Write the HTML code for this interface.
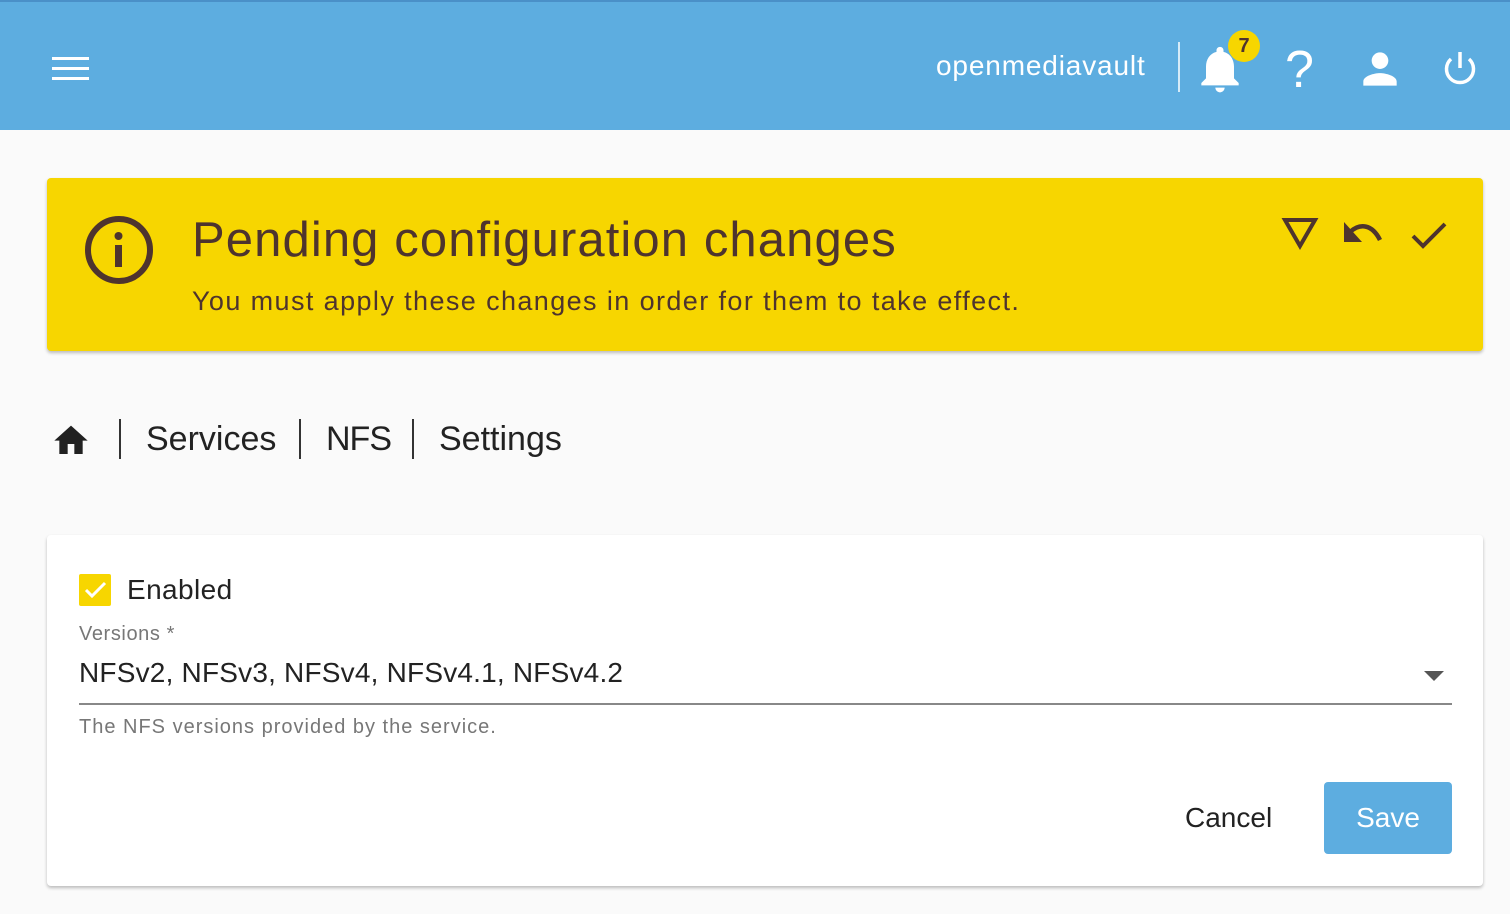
<!DOCTYPE html>
<html><head><style>
body{margin:0;width:1510px;height:914px;background:#fafafa;font-family:"Liberation Sans",sans-serif;position:relative;overflow:hidden}
.hdr{position:absolute;left:0;top:0;width:1510px;height:130px;background:#5dade0;border-top:2px solid #4a90c8;box-sizing:border-box}
.abs{position:absolute}
.banner{position:absolute;left:47px;top:178px;width:1436px;height:173px;background:#f7d600;border-radius:4px;box-shadow:0 2px 3px rgba(0,0,0,.25);color:#4e342e}
.card{position:absolute;left:47px;top:535px;width:1436px;height:351px;background:#fff;border-radius:4px;box-shadow:0 2px 3px rgba(0,0,0,.25)}
</style></head><body>
<div class="hdr">
<svg class="abs" style="left:52px;top:54px" width="38" height="28"><rect y="1" width="37" height="3" fill="#fff"/><rect y="11" width="37" height="3" fill="#fff"/><rect y="21" width="37" height="3" fill="#fff"/></svg>
<div class="abs" style="left:936px;top:48px;font-size:28px;color:#fff;letter-spacing:0.85px">openmediavault</div>
<div class="abs" style="left:1178px;top:40px;width:2px;height:50px;background:#d6ebf8"></div>
<svg class="abs" style="left:1192px;top:38px" width="56" height="58" viewBox="0 0 24 24"><path fill="#fff" d="M12 22c1.1 0 2-.9 2-2h-4c0 1.1.9 2 2 2zm6-6v-5c0-3.07-1.64-5.64-4.5-6.32V4c0-.83-.67-1.5-1.5-1.5s-1.5.67-1.5 1.5v.68C7.63 5.36 6 7.92 6 11v5l-2 2v1h16v-1l-2-2z"/></svg>
<div class="abs" style="left:1228px;top:28px;width:32px;height:32px;border-radius:50%;background:#f7d600;color:#4e342e;font-size:20px;font-weight:bold;text-align:center;line-height:32px">7</div>
<div class="abs" style="left:1285px;top:38px;font-size:52px;color:#fff">?</div>
<svg class="abs" style="left:1355px;top:42px" width="50" height="50" viewBox="0 0 24 24"><path fill="#fff" d="M12 12c2.21 0 4-1.79 4-4s-1.79-4-4-4-4 1.79-4 4 1.79 4 4 4zm0 2c-2.67 0-8 1.34-8 4v2h16v-2c0-2.66-5.33-4-8-4z"/></svg>
<svg class="abs" style="left:1440px;top:48px" width="40" height="40" viewBox="0 0 40 40"><path d="M20 2v16" stroke="#fff" stroke-width="3.5" fill="none"/><path d="M11 9a13.5 13.5 0 1 0 18 0" stroke="#fff" stroke-width="3.5" fill="none"/></svg>
</div>
<div class="banner">
<svg class="abs" style="left:37px;top:37px" width="70" height="70" viewBox="0 0 70 70"><circle cx="35" cy="35" r="31" stroke="#4e342e" stroke-width="6" fill="none"/><rect x="31" y="30" width="7" height="22" fill="#4e342e"/><circle cx="34.5" cy="21" r="4" fill="#4e342e"/></svg>
<div class="abs" style="left:145px;top:34px;font-size:49px;letter-spacing:1.1px">Pending configuration changes</div>
<div class="abs" style="left:145px;top:108px;font-size:27px;letter-spacing:1.4px">You must apply these changes in order for them to take effect.</div>
<svg class="abs" style="left:1233px;top:38px" width="40" height="36"><path d="M5 4h30L20 30z" stroke="#4e342e" stroke-width="4" fill="none"/></svg>
<svg class="abs" style="left:1293px;top:40px" width="48" height="30"><path d="M10 14c10-9 22-8 30 8" stroke="#4e342e" stroke-width="4.5" fill="none"/><path d="M4 4v20h18z" fill="#4e342e"/></svg>
<svg class="abs" style="left:1360px;top:40px" width="46" height="36"><path d="M6 18l10 10L38 6" stroke="#4e342e" stroke-width="4" fill="none"/></svg>
</div>
<svg class="abs" style="left:51px;top:420px" width="40" height="38" viewBox="0 0 24 22"><path fill="#212121" d="M10 20v-6h4v6h5v-8h3L12 3 2 12h3v8z"/></svg>
<div class="abs" style="left:119px;top:419px;width:2px;height:40px;background:#333"></div>
<div class="abs" style="left:146px;top:420px;font-size:34px;color:#222">Services</div>
<div class="abs" style="left:299px;top:419px;width:2px;height:40px;background:#333"></div>
<div class="abs" style="left:326px;top:420px;font-size:34px;color:#222;letter-spacing:-1px">NFS</div>
<div class="abs" style="left:412px;top:419px;width:2px;height:40px;background:#333"></div>
<div class="abs" style="left:439px;top:420px;font-size:34px;color:#222">Settings</div>
<div class="card">
<div class="abs" style="left:32px;top:39px;width:32px;height:32px;background:#f7d600;border-radius:2px"></div>
<svg class="abs" style="left:32px;top:39px" width="32" height="32"><path d="M7 16l6 6L26 9" stroke="#fff" stroke-width="3" fill="none"/></svg>
<div class="abs" style="left:80px;top:39px;font-size:28px;color:#222;letter-spacing:0.4px">Enabled</div>
<div class="abs" style="left:32px;top:88px;font-size:20px;color:#777;letter-spacing:0.6px">Versions *</div>
<div class="abs" style="left:32px;top:122px;font-size:28px;color:#222;letter-spacing:0.2px">NFSv2, NFSv3, NFSv4, NFSv4.1, NFSv4.2</div>
<svg class="abs" style="left:1375px;top:134px" width="24" height="14"><path d="M2 2h20L12 12z" fill="#555"/></svg>
<div class="abs" style="left:32px;top:168px;width:1373px;height:2px;background:#888"></div>
<div class="abs" style="left:32px;top:181px;font-size:20px;color:#777;letter-spacing:1px">The NFS versions provided by the service.</div>
<div class="abs" style="left:1138px;top:267px;font-size:28px;color:#222">Cancel</div>
<div class="abs" style="left:1277px;top:247px;width:128px;height:72px;background:#5dade0;border-radius:4px;color:#fff;font-size:28px;text-align:center;line-height:72px">Save</div>
</div>
</body></html>
